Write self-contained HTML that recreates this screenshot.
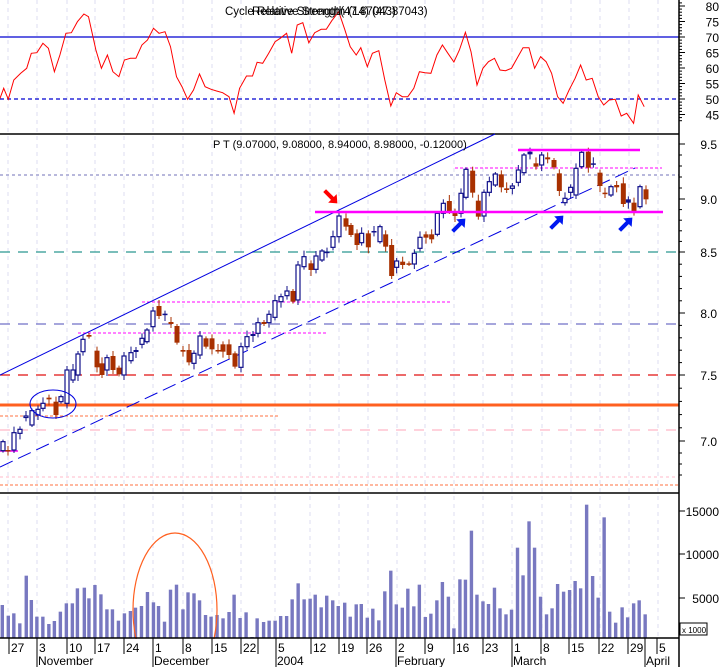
<!DOCTYPE html>
<html><head><meta charset="utf-8"><style>
html,body{margin:0;padding:0;background:#fff;width:723px;height:667px;overflow:hidden;}
svg{display:block;font-family:"Liberation Sans",sans-serif;}
</style></head><body>
<svg id="c" width="723" height="667" xmlns="http://www.w3.org/2000/svg"></svg>
<script>
var s='';
function L(x1,y1,x2,y2,c,w,d){s+='<line x1="'+x1+'" y1="'+y1+'" x2="'+x2+'" y2="'+y2+'" stroke="'+c+'" stroke-width="'+(w||1)+'"'+(d?' stroke-dasharray="'+d+'"':'')+'/>';}
function T(x,y,t,a,sz){s+='<text x="'+x+'" y="'+y+'" font-size="'+(sz||12)+'" text-anchor="'+(a||'start')+'" fill="#000">'+t+'</text>';}
var AX=679;
var grid=[8,37,67,95,124,153,183,212,241,275,310,339,368,397,425,454,483,512,542,571,600,629,658];
grid.forEach(function(x){L(x,0,x,638,'#dcdcf0',1,'4,4');});
L(0,37,AX,37,'#0000d0',1.3);
L(0,99,AX,99,'#0000d0',1.3,'4,3');
var r=[[0,295],[8,265],[18,298],[30,240],[45,220],[58,205],[68,160],[80,158],[93,130],[105,145],[118,215],[130,165],[143,100],[155,98],[168,65],[182,42],[192,50],[208,150],[220,205],[233,165],[245,215],[258,230],[270,180],[283,175],[295,175],[308,135],[320,120],[333,85],[345,100],[358,95],[370,140],[383,230],[395,260],[407,298],[420,270],[433,222],[445,260],[458,268],[470,273],[483,278],[497,290],[508,340],[520,265],[535,228],[548,228],[558,187],[570,190],[583,160],[597,125],[608,115],[622,100],[633,160],[645,75],[657,68],[670,128],[683,98],[697,88],[708,88],[720,62],[735,35],[748,88],[760,140],[773,165],[783,143],[797,200],[808,160],[822,152],[835,240],[848,318],[860,278],[873,290],[885,290],[898,265],[910,215],[922,218],[935,220],[948,165],[960,135],[972,160],[985,186],[997,150],[1010,97],[1022,155],[1035,255],[1048,205],[1060,185],[1073,175],[1085,210],[1097,212],[1110,205],[1122,175],[1135,143],[1148,143],[1160,205],[1173,170],[1185,185],[1197,220],[1210,290],[1222,310],[1235,270],[1248,235],[1260,195],[1272,240],[1285,235],[1298,290],[1310,315],[1322,300],[1335,298],[1348,348],[1360,340],[1375,370],[1385,285],[1398,320]];
s+='<polyline fill="none" stroke="#f00" stroke-width="1" points="'+r.map(function(p){return (p[0]/2.17).toFixed(1)+','+(p[1]/3).toFixed(1)}).join(' ')+'"/>';
T(225,15,'Cycle Relative Strength (14) (47.87043)','start',11.5);
T(252,15,'Relative Strength(47.87043)','start',11.5);
L(0,134,AX,134,'#000',1.5);
L(0,175,AX,175,'#7070b8',1,'3,3');
L(0,252,AX,252,'#2a9890',1.3,'10,8');
L(0,324,AX,324,'#7070c8',1.3,'10,8');
L(0,375,AX,375,'#e01010',1.3,'10,8');
L(0,405,AX,405,'#ff6020',3);
L(0,416,280,416,'#ff7040',1,'3,2');
L(0,430,AX,430,'#ffb8c8',1.3,'10,8');
L(0,477,AX,477,'#ffb8c8',1,'3,3');
L(0,485,AX,485,'#ff7040',1,'3,2');
L(142,302,452,302,'#ff00ff',1,'3,2');
L(78,333,327,333,'#ff00ff',1,'3,2');
L(455,168,662,168,'#ff00ff',1,'3,2');
L(0,451,18,451,'#ff00ff',1.5);
L(0,375,495,134,'#0000e0',1);
L(0,467,635,168,'#0000e0',1,'14,6');
var c=[[3,935,962,0],[8,960,962,1],[14,908,960,0],[20,898,910,0],[26,858,862,0],[32,842,885,0],[38,838,855,0],[43,820,835,0],[49,803,808,1],[56,815,855,1],[61,800,815,0],[67,720,820,0],[73,720,750,0],[78,672,735,0],[83,628,665,0],[89,615,620,1],[97,662,712,1],[102,700,735,1],[107,683,720,0],[113,678,720,1],[119,713,733,1],[124,678,735,0],[131,668,692,0],[136,660,666,2],[142,625,643,0],[147,600,635,0],[153,543,590,0],[159,528,558,1],[165,551,555,2],[171,576,582,1],[177,588,638,1],[183,660,665,1],[189,660,697,1],[194,670,700,0],[200,618,675,0],[206,625,650,1],[212,625,658,1],[218,660,662,1],[223,643,665,1],[229,643,675,1],[235,670,710,1],[241,650,712,0],[247,620,650,0],[253,612,618,2],[258,578,610,0],[264,576,582,1],[269,553,578,0],[275,512,562,0],[281,500,515,0],[287,483,497,0],[293,483,515,1],[298,405,510,0],[304,380,410,0],[311,400,420,1],[316,378,418,0],[322,363,390,0],[327,365,368,2],[333,320,352,0],[339,258,320,0],[346,265,290,1],[351,285,315,1],[357,310,345,1]];
var c2=[[5,310,338,0],[25,310,352,1],[42,303,307,2],[60,290,335,0],[77,313,350,1],[95,345,438,1],[110,393,412,0],[128,395,405,1],[147,400,402,1],[163,370,402,0],[180,322,355,0],[198,313,323,1],[215,313,328,1],[232,250,313,0],[250,220,250,0],[268,213,243,1],[285,245,258,1],[303,190,250,0],[318,118,202,0],[338,122,188,1],[355,212,260,1],[372,187,258,0],[388,155,187,0],[406,132,165,0],[424,133,172,1],[440,175,180,1],[457,168,175,0],[475,120,157,0],[492,75,128,0],[510,65,73,2],[528,100,110,1],[545,75,105,0],[563,82,88,1],[582,90,112,1],[598,130,183,1],[615,205,218,0],[632,172,187,0],[648,115,195,0],[665,67,110,0],[685,65,113,1],[700,100,104,2],[720,128,168,1],[735,188,192,1],[753,170,195,0],[770,165,172,1],[790,160,222,1],[805,208,218,2],[822,218,245,1],[840,170,230,0],[858,178,208,1]];
c2.forEach(function(p){c.push([360+p[0]/3,p[1],p[2],p[3]]);});
c.forEach(function(p,i){var x=p[0],t=130+p[1]/3,b=130+p[2]/3;var col=p[3]==0||p[3]==2?'#10108a':'#a83000';
 var wt=t-2-(i*7%5),wb=b+2+(i*3%5);L(x,wt,x,wb,col,1);
 if(b-t<1.5){b=t+1.5;}
 if(p[3]==0)s+='<rect x="'+(x-2)+'" y="'+t+'" width="4" height="'+(b-t)+'" fill="#fff" stroke="'+col+'" stroke-width="1.2"/>';
 else s+='<rect x="'+(x-2.5)+'" y="'+t+'" width="5" height="'+(b-t)+'" fill="'+col+'"/>';});
L(315,212,663,212,'#ff00ff',2.5);
L(518,150,640,150,'#ff00ff',2.5);
s+='<ellipse cx="53" cy="404" rx="23" ry="14" fill="none" stroke="#0000e0" stroke-width="1"/>';
function arr(x,y,ang,col){s+='<g transform="translate('+x+','+y+') rotate('+ang+')"><polygon points="-9,-2 2,-2 2,-6 9,0 2,6 2,2 -9,2" fill="'+col+'"/></g>';}
arr(331,197,45,'#f00');
arr(459,225,-45,'#0018f0');arr(557,222,-45,'#0018f0');arr(626,224,-45,'#0018f0');
T(213,148,'P T (9.07000, 9.08000, 8.94000, 8.98000, -0.12000)','start',11);
L(0,493,AX,493,'#000',1.5);
var v=[[5,345],[18,377],[30,370],[43,400],[57,257],[68,330],[80,380],[93,380],[106,402],[118,393],[131,365],[144,340],[157,340],[168,295],[183,293],[193,325],[206,285],[219,313],[232,358],[244,358],[257,392],[270,370],[283,363],[294,353],[307,348],[320,306],[333,337],[344,348],[357,395],[370,299],[383,284],[397,358],[408,307],[421,310],[433,331],[446,375],[458,380],[471,375],[484,385],[497,366],[508,314],[521,384],[534,367],[547,441],[558,385],[572,396],[584,392],[597,392],[609,378],[622,378],[634,328],[647,280],[660,328],[673,326],[684,314],[697,352],[709,317],[722,331],[734,348],[748,338],[760,380],[773,343],[784,342],[797,383],[809,356],[822,391],[835,304],[848,242],[860,343],[873,353],[885,296],[898,349],[910,284],[923,381],[935,371],[948,331],[960,276],[973,320],[985,415],[998,268],[1010,269],[1023,122],[1035,314],[1048,334],[1060,342],[1073,293],[1085,355],[1098,373],[1110,359],[1123,173],[1135,256],[1148,94],[1160,173],[1173,320],[1186,373],[1198,355],[1210,282],[1223,305],[1236,300],[1248,273],[1260,295],[1273,44],[1286,258],[1298,323],[1311,82],[1323,365],[1336,398],[1350,352],[1362,382],[1375,340],[1387,331],[1400,373]];
v.forEach(function(p){var x=p[0]/2.17,y=490+p[1]/3;s+='<rect x="'+(x-1.7)+'" y="'+y+'" width="3.4" height="'+(638-y)+'" fill="#7878c0"/>';});
s+='<ellipse cx="175" cy="610" rx="42" ry="77" fill="none" stroke="#ff6020" stroke-width="1.2"/>';
s+='<rect x="0" y="639" width="723" height="28" fill="#fff"/>';
L(AX,0,AX,667,'#000',1.5);
L(0,638,AX,638,'#000',1.5);
for(var u=43;u<=81;u++){var y=99-(u-50)*3.1;L(AX,y,AX+(u%5==0?6:3),y,'#000',1);}
[80,75,70,65,60,55,50,45].forEach(function(u){T(719,99-(u-50)*3.1+5,u,'end',12);});
var pl=[[9.5,144],[9.0,199],[8.5,252],[8.0,313],[7.5,375],[7.0,441]];
pl.forEach(function(p){L(AX,p[1],AX+6,p[1],'#000',1);T(717,p[1]+5,p[0].toFixed(1),'end',12);});
for(var i=0;i<pl.length-1;i++){for(var k=1;k<5;k++){var y=pl[i][1]+(pl[i+1][1]-pl[i][1])*k/5;L(AX,y,AX+3,y,'#000',1);}}
[475,464,453].forEach(function(y){L(AX,y,AX+3,y,'#000',1);});
[[511,'15000'],[554,'10000'],[598,'5000']].forEach(function(p){L(AX,p[0],AX+6,p[0],'#000',1);T(719,p[0]+5,p[1],'end',12);});
s+='<rect x="680" y="623" width="27" height="12" fill="#fff" stroke="#000" stroke-width="1"/>';T(682,633,'x 1000','start',8);
var d=[[9,'27'],[37,'3'],[67,'10'],[95,'17'],[124,'24'],[153,'1'],[183,'8'],[212,'15'],[241,'22'],[258,''],[276,'5'],[311,'12'],[339,'19'],[367,'26'],[396,'2'],[425,'9'],[454,'16'],[483,'23'],[512,'1'],[541,'8'],[569,'15'],[599,'22'],[628,'29'],[657,'5']];
d.forEach(function(p){L(p[0],638,p[0],654,'#000',1);if(p[1])T(p[0]+2,652,p[1],'start',12);});
[[37,'November'],[153,'December'],[276,'2004'],[396,'February'],[512,'March'],[645,'April']].forEach(function(p){L(p[0],638,p[0],667,'#000',1);T(p[0]+1,665,p[1],'start',12);});
document.getElementById('c').innerHTML=s;
</script>
</body></html>
